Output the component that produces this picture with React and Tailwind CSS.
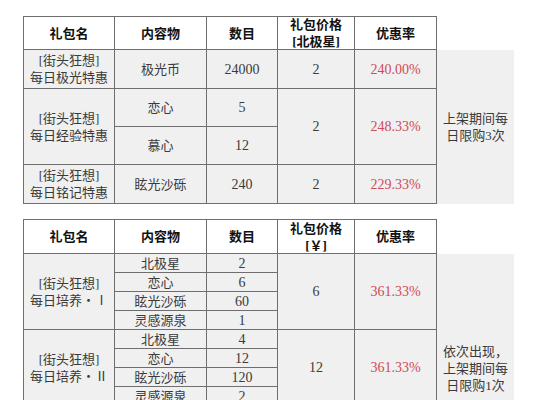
import React from 'react';

const font = { fontFamily: '"Liberation Serif", "Noto Sans CJK SC", serif' };

const Cell = ({ children, head, red, span, className = '' }) => (
    <div
        className={`flex items-center justify-center text-center border-r border-b border-[#6e6e6e] leading-[17px] ${
            head ? 'bg-white text-[#111] font-bold text-[13px]' : 'bg-[#f0f0f0] text-[13px]'
        } ${red ? 'text-[#cf4b57] text-[14px]' : head ? '' : 'text-[#3a3a3a]'} ${span || ''} ${className}`}
    >
        {children}
    </div>
);

const Num = ({ children }) => <span className="text-[14px]">{children}</span>;

const Side = ({ children, className }) => (
    <div className={`w-[77px] shrink-0 bg-[#f0f0f0] flex items-center justify-center text-center text-[13px] leading-[17px] text-[#3a3a3a] ${className}`}>
        {children}
    </div>
);

const Table1 = () => (
    <div className="flex items-start">
        <div className="grid grid-cols-[91px_92px_71px_77px_82px] grid-rows-[33px_39px_38px_38px_39px] border-l border-t border-[#6e6e6e]">
            <Cell head>礼包名</Cell>
            <Cell head>内容物</Cell>
            <Cell head>数目</Cell>
            <Cell head>礼包价格<br />[北极星]</Cell>
            <Cell head>优惠率</Cell>

            <Cell>[街头狂想]<br />每日极光特惠</Cell>
            <Cell>极光币</Cell>
            <Cell><Num>24000</Num></Cell>
            <Cell><Num>2</Num></Cell>
            <Cell red>240.00%</Cell>

            <Cell span="row-span-2">[街头狂想]<br />每日经验特惠</Cell>
            <Cell>恋心</Cell>
            <Cell><Num>5</Num></Cell>
            <Cell span="row-span-2"><Num>2</Num></Cell>
            <Cell span="row-span-2" red>248.33%</Cell>
            <Cell>慕心</Cell>
            <Cell><Num>12</Num></Cell>

            <Cell>[街头狂想]<br />每日铭记特惠</Cell>
            <Cell>眩光沙砾</Cell>
            <Cell><Num>240</Num></Cell>
            <Cell><Num>2</Num></Cell>
            <Cell red>229.33%</Cell>
        </div>
        <Side className="mt-[34px] h-[154px]">上架期间每<br />日限购3次</Side>
    </div>
);

const groups = [
    { name: '每日培养・Ⅰ', price: '6', rate: '361.33%', items: [['北极星', '2'], ['恋心', '6'], ['眩光沙砾', '60'], ['灵感源泉', '1']] },
    { name: '每日培养・Ⅱ', price: '12', rate: '361.33%', items: [['北极星', '4'], ['恋心', '12'], ['眩光沙砾', '120'], ['灵感源泉', '2']] },
];

const Table2 = () => (
    <div className="flex items-start">
        <div className="grid grid-cols-[91px_92px_71px_77px_82px] grid-rows-[34px_repeat(8,19px)] border-l border-t border-[#6e6e6e]">
            <Cell head>礼包名</Cell>
            <Cell head>内容物</Cell>
            <Cell head>数目</Cell>
            <Cell head>礼包价格<br />[￥]</Cell>
            <Cell head>优惠率</Cell>
            {groups.map(g => (
                <React.Fragment key={g.name}>
                    <Cell span="row-span-4">[街头狂想]<br />{g.name}</Cell>
                    <Cell>{g.items[0][0]}</Cell>
                    <Cell><Num>{g.items[0][1]}</Num></Cell>
                    <Cell span="row-span-4"><Num>{g.price}</Num></Cell>
                    <Cell span="row-span-4" red>{g.rate}</Cell>
                    {g.items.slice(1).map(([item, n]) => (
                        <React.Fragment key={item}>
                            <Cell>{item}</Cell>
                            <Cell><Num>{n}</Num></Cell>
                        </React.Fragment>
                    ))}
                </React.Fragment>
            ))}
        </div>
        <Side className="mt-[35px] h-[228px]">依次出现，<br />上架期间每<br />日限购1次</Side>
    </div>
);

export default function App() {
    return (
        <div className="w-[533px] h-[400px] overflow-hidden bg-white pt-4 pl-[23px] flex flex-col gap-[15px]" style={font}>
            <Table1 />
            <Table2 />
        </div>
    );
}
